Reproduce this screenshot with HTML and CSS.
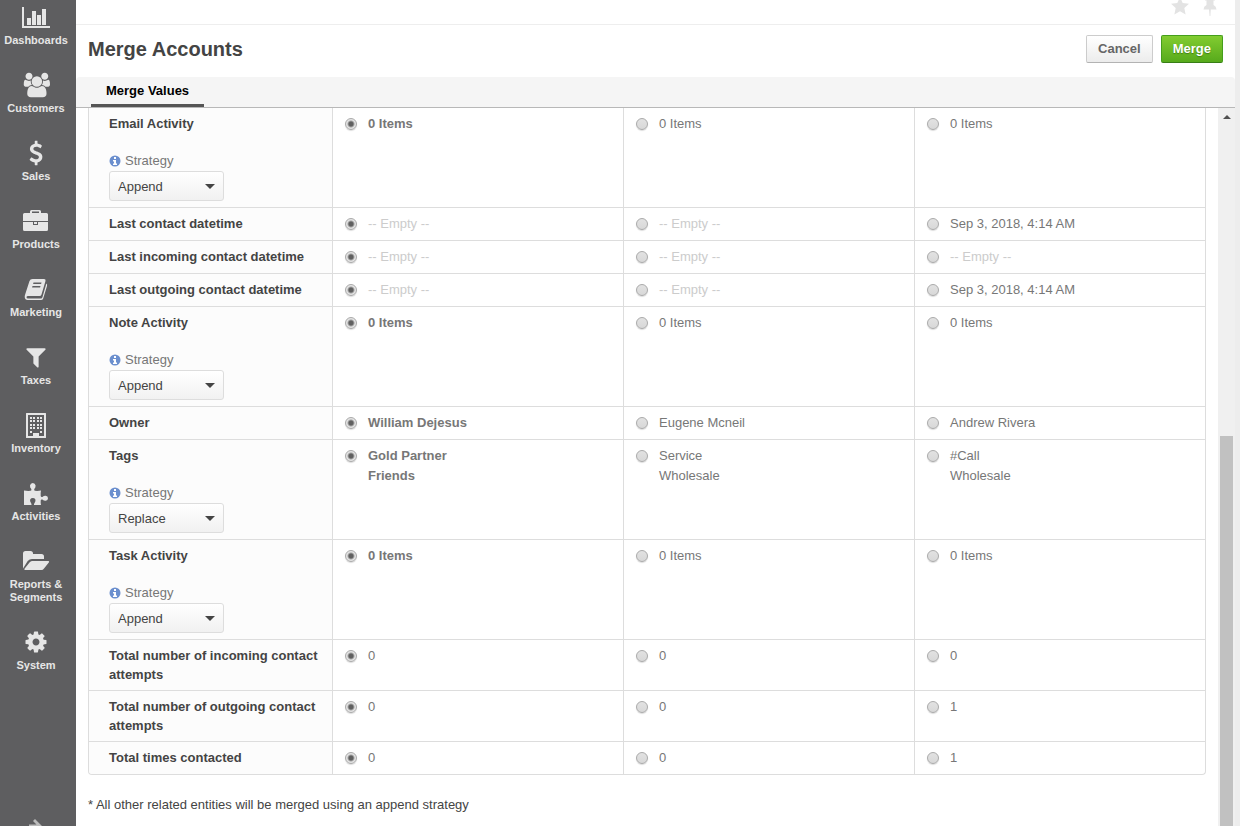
FILE: index.html
```html
<!DOCTYPE html>
<html lang="en">
<head>
<meta charset="utf-8">
<title>Merge Accounts</title>
<link rel="stylesheet" href="styles.css">
</head>
<body>
<div class="app">
  <nav class="sidebar" aria-label="Main menu">
    <a class="nav-item" href="#"><svg class="nav-icon" viewBox="0 0 28 28"><path d="M0 4h2v19h26v2H0zM5 15h4v7H5zM10 8h4v14h-4zM15 12h4v10h-4zM20 6h4v16h-4z"/></svg><span>Dashboards</span></a>
    <a class="nav-item" href="#"><svg class="nav-icon" viewBox="-64 -128 2048 2048"><path d="M657 896q-162 5-265 128h-134q-82 0-138-40.500t-56-118.500q0-353 124-353 6 0 43.500 21t97.500 42.500 119 21.500q67 0 133-23-5 37-5 66 0 139 81 256zm1071 637q0 120-73 189.500t-194 69.500h-874q-121 0-194-69.500t-73-189.500q0-53 3.500-103.500t14-109 26.500-108.500 43-97.500 62-81 85.500-53.500 111.500-20q10 0 43 21.500t73 48 107 48 135 21.500 135-21.500 107-48 73-48 43-21.500q61 0 111.500 20t85.500 53.500 62 81 43 97.500 26.500 108.500 14 109 3.500 103.500zm-1024-1277q0 106-75 181t-181 75-181-75-75-181 75-181 181-75 181 75 75 181zm704 384q0 159-112.500 271.500t-271.500 112.500-271.500-112.500-112.500-271.500 112.500-271.500 271.500-112.500 271.500 112.500 112.500 271.500zm576 225q0 78-56 118.500t-138 40.500h-134q-103-123-265-128 81-117 81-256 0-29-5-66 66 23 133 23 59 0 119-21.500t97.500-42.500 43.500-21q124 0 124 353zm-128-609q0 106-75 181t-181 75-181-75-75-181 75-181 181-75 181 75 75 181z"/></svg><span>Customers</span></a>
    <a class="nav-item" href="#"><svg class="nav-icon" viewBox="-128 -128 2048 2048"><path d="M1362 1185q0 153-99.500 263.500t-258.500 136.500v175q0 14-9 23t-23 9h-135q-13 0-22.500-9.500t-9.500-22.500v-175q-66-9-127.500-31t-101.500-44.500-74-48-46.500-37.500-17.500-18q-17-21-2-41l103-135q7-10 23-12 15-2 24 9l2 2q113 99 243 125 37 8 74 8 81 0 142.500-43t61.500-122q0-28-15-53t-33.500-42-58.500-37.500-66-32-80-32.500q-39-16-61.500-25t-61.500-26.500-62.500-31-56.500-35.500-53.500-42.500-43.500-49-35.500-58-21-66.500-8.500-78q0-138 98-242t255-134v-180q0-13 9.500-22.500t22.500-9.500h135q14 0 23 9t9 23v176q57 6 110.500 23t87 33.500 63.500 37.500 39 29 15 14q17 18 5 38l-81 146q-8 15-23 16-14 3-27-7-3-3-14.500-12t-39-26.500-58.500-32-74.500-26-85.500-11.500q-95 0-155 43t-60 111q0 26 8.500 48t29.500 41.500 39.500 33 56 31 60.500 27 70 27.500q53 20 81 31.500t76 35 75.500 42.500 62 50 53 63.500 31.500 76.500 13 94z"/></svg><span>Sales</span></a>
    <a class="nav-item" href="#"><svg class="nav-icon" viewBox="0 0 28 28"><path fill-rule="evenodd" d="M8 6V4.500Q8 3 9.500 3h8Q19 3 19 4.500V6h5.500Q26 6 26 7.500V14H1V7.500Q1 6 2.500 6zM10 6h7V4.500h-7zM1 15h10v3h5v-3h10v7.500q0 1.500-1.500 1.500h-22Q1 24 1 22.500zM12 15h3v2h-3z"/></svg><span>Products</span></a>
    <a class="nav-item" href="#"><svg class="nav-icon" viewBox="0 0 28 28"><path fill-rule="evenodd" d="M10.500 4H22q2 0 1.500 2l-4 13.500Q19 21 17.500 21H6q-1.500 0-1.500 1.200T6 23.500h13q1 0 1.500-1.500l3.900-13.500q1.100.8.600 2.500L21.200 23.500Q20.600 25 19 25H5.500Q3 25 2.700 22q0-1.500.6-3L7.500 6Q8.200 4 10.500 4zM11.500 7.500l-.4 1.500h8l.4-1.500zM10.500 11l-.4 1.500h8l.4-1.500z"/></svg><span>Marketing</span></a>
    <a class="nav-item" href="#"><svg class="nav-icon" viewBox="-128 -128 2048 2048"><path d="M1595 295q17 41-14 70l-493 493v742q0 42-39 59-13 5-25 5-27 0-45-19l-256-256q-19-19-19-45v-486l-493-493q-31-29-14-70 17-39 59-39h1280q42 0 59 39z"/></svg><span>Taxes</span></a>
    <a class="nav-item" href="#"><svg class="nav-icon" viewBox="0 0 28 28"><path fill-rule="evenodd" d="M4.500 2h19q.5 0 .5.500v24q0 .5-.5.500h-19q-.5 0-.5-.500v-24q0-.500.500-.500zM6 4v21h5v-3h6v3h5V4z"/><path d="M8 6h2v2H8zm3 0h2v2h-2zm4 0h2v2h-2zm3 0h2v2h-2zM8 9h2v2H8zm3 0h2v2h-2zm4 0h2v2h-2zm3 0h2v2h-2zM8 13h2v2H8zm3 0h2v2h-2zm4 0h2v2h-2zm3 0h2v2h-2zM8 16h2v2H8zm3 0h2v2h-2zm4 0h2v2h-2zm3 0h2v2h-2zM8 20h2v2H8zm10 0h2v2h-2z"/></svg><span>Inventory</span></a>
    <a class="nav-item" href="#"><svg class="nav-icon" viewBox="0 0 28 28"><path d="M2 11.500q3.500.7 6.500.3 1.500-.3.800-1.800-1.500-1.500-1.300-3.500Q8.500 4 10.800 4t2.800 2.500q.1 2-1.300 3.500-.7 1.500.8 1.800 3 .3 5.900-.3-.6 3-.3 5.500.3 1.500 1.700.9 1.600-1.400 3.300-1.200Q26 17 26 19.200t-2.300 2.600q-1.700.2-3.300-1.200-1.400-.6-1.700.9-.2 2 .3 4.500H12q-.3-1 .7-2.200Q14 22 13.300 20.200 12.500 19 10.800 19t-2.500 1.200Q7.500 22 8.900 23.800 9.700 25 9.500 26H2z"/></svg><span>Activities</span></a>
    <a class="nav-item" href="#"><svg class="nav-icon" viewBox="0 0 28 28"><path d="M1 21.500V6.500Q1 4 3.500 4h5Q11 4 11 6.500V7h8.500Q22 7 22 9.500V12H10q-2.500 0-4.300 2zM3 23q-1 0-.5-1.200l5-6.300Q8.500 14 10 14h16.500q1 .2.500 1.200l-5 6.300Q21 23 19.500 23z"/></svg><span>Reports &amp; Segments</span></a>
    <a class="nav-item" href="#"><svg class="nav-icon" viewBox="-128 -128 2048 2048"><path d="M1152 896q0-106-75-181t-181-75-181 75-75 181 75 181 181 75 181-75 75-181zm512-109v222q0 12-8 23t-20 13l-185 28q-19 54-39 91 35 50 107 138 10 12 10 25t-9 23q-27 37-99 108t-94 71q-12 0-26-9l-138-108q-44 23-91 38-16 136-29 186-7 28-36 28h-222q-14 0-24.500-8.500t-11.500-21.500l-28-184q-49-16-90-37l-141 107q-10 9-25 9-14 0-25-11-126-114-165-168-7-10-7-23 0-12 8-23 15-21 51-66.500t54-70.500q-27-50-41-99l-183-27q-13-2-21-12.500t-8-23.500v-222q0-12 8-23t19-13l186-28q14-46 39-92-40-57-107-138-10-12-10-24 0-10 9-23 26-36 98.500-107.500t94.500-71.500q13 0 26 10l138 107q44-23 91-38 16-136 29-186 7-28 36-28h222q14 0 24.500 8.500t11.500 21.500l28 184q49 16 90 37l142-107q9-9 24-9 13 0 25 10 129 119 165 170 7 8 7 22 0 12-8 23-15 21-51 66.500t-54 70.500q26 50 41 98l183 28q13 2 21 12.500t8 23.500z"/></svg><span>System</span></a>
    <button class="expand" type="button" aria-label="Expand menu"><svg class="expand-icon" viewBox="0 0 14 14"><path d="M6 0l7 7-7 7-2-2 3.500-3.500H0v-3h7.500L4 2z"/></svg></button>
  </nav>

  <main class="page">
    <div class="topbar">
      <button class="icon-button" type="button" aria-label="Favorite"><svg class="top-icon" viewBox="0 0 20 20"><path d="M10 1l2.700 6 6.300.7-4.700 4.300 1.300 6.500L10 15.300l-5.600 3.200L5.700 12 1 7.700 7.300 7z"/></svg></button>
      <button class="icon-button" type="button" aria-label="Pin"><svg class="top-icon" viewBox="0 0 20 20"><path d="M5 2h10v2.500h-1.500V9q2.800 1.300 3 4.500h-5.700L10.400 20h-.8l-.6-6.500H3.500q.2-3.200 3-4.500V4.500H5z"/></svg></button>
    </div>
    <header class="header">
      <h1 class="title">Merge Accounts</h1>
      <div class="actions">
        <button class="button" type="button">Cancel</button>
        <button class="button button-primary" type="submit" form="merge">Merge</button>
      </div>
    </header>
    <div class="tabs"><a class="tab" href="#merge">Merge Values</a></div>

    <div class="scroll-area">
      <form class="content" id="merge">
        <table class="merge-table">
          <colgroup><col class="name-col"><col><col><col></colgroup>
          <tbody>
            <tr>
              <th scope="row">Email Activity
                <div class="strategy"><label class="strategy-label" for="s-email"><svg class="info" viewBox="0 0 12 12"><circle cx="6" cy="6" r="5.500"/><path d="M5 2h2v2H5zM4 5h3v3.500h1V10H4V8.500h1v-2H4z"/></svg>Strategy</label><span class="select-box"><select class="select" id="s-email"><option>Append</option><option>Replace</option></select></span></div></th>
              <td><label class="choice"><input class="radio" type="radio" name="email" checked><b>0 Items</b></label></td>
              <td><label class="choice"><input class="radio" type="radio" name="email"><span>0 Items</span></label></td>
              <td><label class="choice"><input class="radio" type="radio" name="email"><span>0 Items</span></label></td>
            </tr>
            <tr>
              <th scope="row">Last contact datetime</th>
              <td><label class="choice empty"><input class="radio" type="radio" name="last" checked><span>-- Empty --</span></label></td>
              <td><label class="choice empty"><input class="radio" type="radio" name="last"><span>-- Empty --</span></label></td>
              <td><label class="choice"><input class="radio" type="radio" name="last"><span>Sep 3, 2018, 4:14 AM</span></label></td>
            </tr>
            <tr>
              <th scope="row">Last incoming contact datetime</th>
              <td><label class="choice empty"><input class="radio" type="radio" name="last-in" checked><span>-- Empty --</span></label></td>
              <td><label class="choice empty"><input class="radio" type="radio" name="last-in"><span>-- Empty --</span></label></td>
              <td><label class="choice empty"><input class="radio" type="radio" name="last-in"><span>-- Empty --</span></label></td>
            </tr>
            <tr>
              <th scope="row">Last outgoing contact datetime</th>
              <td><label class="choice empty"><input class="radio" type="radio" name="last-out" checked><span>-- Empty --</span></label></td>
              <td><label class="choice empty"><input class="radio" type="radio" name="last-out"><span>-- Empty --</span></label></td>
              <td><label class="choice"><input class="radio" type="radio" name="last-out"><span>Sep 3, 2018, 4:14 AM</span></label></td>
            </tr>
            <tr>
              <th scope="row">Note Activity
                <div class="strategy"><label class="strategy-label" for="s-note"><svg class="info" viewBox="0 0 12 12"><circle cx="6" cy="6" r="5.500"/><path d="M5 2h2v2H5zM4 5h3v3.500h1V10H4V8.500h1v-2H4z"/></svg>Strategy</label><span class="select-box"><select class="select" id="s-note"><option>Append</option><option>Replace</option></select></span></div></th>
              <td><label class="choice"><input class="radio" type="radio" name="note" checked><b>0 Items</b></label></td>
              <td><label class="choice"><input class="radio" type="radio" name="note"><span>0 Items</span></label></td>
              <td><label class="choice"><input class="radio" type="radio" name="note"><span>0 Items</span></label></td>
            </tr>
            <tr>
              <th scope="row">Owner</th>
              <td><label class="choice"><input class="radio" type="radio" name="owner" checked><b>William Dejesus</b></label></td>
              <td><label class="choice"><input class="radio" type="radio" name="owner"><span>Eugene Mcneil</span></label></td>
              <td><label class="choice"><input class="radio" type="radio" name="owner"><span>Andrew Rivera</span></label></td>
            </tr>
            <tr>
              <th scope="row">Tags
                <div class="strategy"><label class="strategy-label" for="s-tags"><svg class="info" viewBox="0 0 12 12"><circle cx="6" cy="6" r="5.500"/><path d="M5 2h2v2H5zM4 5h3v3.500h1V10H4V8.500h1v-2H4z"/></svg>Strategy</label><span class="select-box"><select class="select" id="s-tags"><option>Replace</option><option>Append</option></select></span></div></th>
              <td><label class="choice"><input class="radio" type="radio" name="tags" checked><b>Gold Partner<br>Friends</b></label></td>
              <td><label class="choice"><input class="radio" type="radio" name="tags"><span>Service<br>Wholesale</span></label></td>
              <td><label class="choice"><input class="radio" type="radio" name="tags"><span>#Call<br>Wholesale</span></label></td>
            </tr>
            <tr>
              <th scope="row">Task Activity
                <div class="strategy"><label class="strategy-label" for="s-task"><svg class="info" viewBox="0 0 12 12"><circle cx="6" cy="6" r="5.500"/><path d="M5 2h2v2H5zM4 5h3v3.500h1V10H4V8.500h1v-2H4z"/></svg>Strategy</label><span class="select-box"><select class="select" id="s-task"><option>Append</option><option>Replace</option></select></span></div></th>
              <td><label class="choice"><input class="radio" type="radio" name="task" checked><b>0 Items</b></label></td>
              <td><label class="choice"><input class="radio" type="radio" name="task"><span>0 Items</span></label></td>
              <td><label class="choice"><input class="radio" type="radio" name="task"><span>0 Items</span></label></td>
            </tr>
            <tr>
              <th scope="row">Total number of incoming contact attempts</th>
              <td><label class="choice"><input class="radio" type="radio" name="total-in" checked><span>0</span></label></td>
              <td><label class="choice"><input class="radio" type="radio" name="total-in"><span>0</span></label></td>
              <td><label class="choice"><input class="radio" type="radio" name="total-in"><span>0</span></label></td>
            </tr>
            <tr>
              <th scope="row">Total number of outgoing contact attempts</th>
              <td><label class="choice"><input class="radio" type="radio" name="total-out" checked><span>0</span></label></td>
              <td><label class="choice"><input class="radio" type="radio" name="total-out"><span>0</span></label></td>
              <td><label class="choice"><input class="radio" type="radio" name="total-out"><span>1</span></label></td>
            </tr>
            <tr>
              <th scope="row">Total times contacted</th>
              <td><label class="choice"><input class="radio" type="radio" name="total" checked><span>0</span></label></td>
              <td><label class="choice"><input class="radio" type="radio" name="total"><span>0</span></label></td>
              <td><label class="choice"><input class="radio" type="radio" name="total"><span>1</span></label></td>
            </tr>
          </tbody>
        </table>
        <p class="note">* All other related entities will be merged using an append strategy</p>
      </form>
      <div class="scrollbar" aria-hidden="true"><div class="scroll-up"></div><div class="scroll-track"></div><div class="scroll-thumb"></div></div>
    </div>
  </main>
</div>
</body>
</html>
```
FILE: styles.css
```css
* {
  box-sizing: border-box;
}

body {
  margin: 0;
  background: #ededed;
  color: #444;
  font: 13px/20px "Liberation Sans", Arial, sans-serif;
}

button,
select,
input {
  margin: 0;
  font: inherit;
}

.app {
  display: flex;
  height: 100vh;
  padding-right: 5px;
  overflow: hidden;
}

/* Sidebar */
.sidebar {
  display: flex;
  flex: none;
  flex-direction: column;
  gap: 24px;
  width: 76px;
  padding: 3px 4px 0 0;
  overflow: hidden;
  background: #5e5e60;
}

.nav-item {
  display: flex;
  flex-direction: column;
  flex: none;
  align-items: center;
  gap: 3px;
  color: #e6e6e6;
  font-size: 11px;
  font-weight: bold;
  line-height: 13px;
  text-align: center;
  text-decoration: none;
}

.nav-icon {
  width: 28px;
  height: 28px;
  fill: #e6e6e6;
}

.expand {
  height: 7px;
  margin-top: auto;
  padding: 0;
  overflow: hidden;
  border: 0;
  background: none;
}

.expand-icon {
  display: block;
  width: 14px;
  height: 14px;
  margin: 0 auto;
  fill: #bbb;
}

/* Page */
.page {
  display: flex;
  flex: 1;
  flex-direction: column;
  min-width: 0;
  background: #fff;
}

.topbar {
  display: flex;
  flex: none;
  justify-content: flex-end;
  gap: 10px;
  height: 25px;
  padding-right: 15px;
  overflow: hidden;
  border-bottom: 1px solid #eee;
}

.icon-button {
  height: 16px;
  padding: 0;
  display: flex;
  align-items: flex-end;
  border: 0;
  background: none;
}

.top-icon {
  flex: none;
  width: 20px;
  height: 20px;
  fill: #e3e3e3;
}

.header {
  display: flex;
  flex: none;
  align-items: center;
  justify-content: space-between;
  padding: 10px 12px 14px;
}

.title {
  margin: 0;
  font-size: 20px;
  line-height: 28px;
}

.actions {
  display: flex;
  gap: 8px;
}

.button {
  height: 28px;
  padding: 0 11px;
  border: 1px solid #ccc;
  border-bottom-color: #b3b3b3;
  border-radius: 2px;
  background: linear-gradient(#fff, #ececec);
  color: #666;
  font-weight: bold;
  line-height: 24px;
}

.button-primary {
  border-color: #459e1c;
  border-bottom-color: #377e16;
  background: linear-gradient(#82cc30, #57aa1c);
  color: #fff;
  text-shadow: 0 1px 1px #3f7f14;
}

.tabs {
  display: flex;
  flex: none;
  height: 31px;
  padding-left: 15px;
  border-bottom: 1px solid #b8b8b8;
  border-radius: 4px 4px 0 0;
  background: #f5f5f5;
}

.tab {
  padding: 4px 15px 0;
  border-bottom: 3px solid #555;
  color: #000;
  font-weight: bold;
  text-decoration: none;
}

.scroll-area {
  display: flex;
  flex: 1;
  min-height: 0;
}

.content {
  flex: 1;
  padding: 0 12px;
  overflow: hidden;
}

/* Merge table */
.merge-table {
  width: 100%;
  border: 1px solid #ddd;
  border-top: 0;
  border-radius: 0 0 4px 4px;
  border-spacing: 0;
  table-layout: fixed;
}

.name-col {
  width: 243px;
}

th,
td {
  padding: 6px 12px;
  border-bottom: 1px solid #ddd;
  vertical-align: top;
}

td {
  border-left: 1px solid #ddd;
  color: #777;
}

th {
  padding-right: 12px;
  padding-left: 20px;
  background: #fcfcfc;
  line-height: 19px;
  text-align: left;
}

tr:last-child th,
tr:last-child td {
  border-bottom: 0;
}

tr:last-child th {
  border-bottom-left-radius: 4px;
}

.choice {
  display: flex;
  gap: 11px;
}

.empty {
  color: #ccc;
}

.radio {
  flex: none;
  width: 12px;
  height: 12px;
  margin-top: 4px;
  border: 1px solid #aaa;
  border-radius: 50%;
  appearance: none;
  background: linear-gradient(#e2e2e2, #d8d8d8);
  box-shadow: 0 1px 1px #ddd;
}

.radio:checked {
  background: radial-gradient(circle, #606060 2px, #e4e4e4 4px);
}

.strategy {
  margin-top: 18px;
  font-weight: normal;
}

.strategy-label {
  display: flex;
  align-items: center;
  gap: 4px;
  color: #777;
  line-height: 20px;
}

.info {
  width: 12px;
  height: 12px;
  fill: #6b8fce;
}

.info path {
  fill: #fff;
}

.select-box {
  display: block;
  position: relative;
  width: 115px;
}

.select-box::after {
  content: "";
  position: absolute;
  top: 13px;
  right: 9px;
  border: 5px solid transparent;
  border-top-color: #444;
  border-bottom-width: 0;
  pointer-events: none;
}

.select {
  display: block;
  width: 100%;
  height: 30px;
  padding: 0 8px;
  border: 1px solid #ddd;
  border-radius: 3px;
  appearance: none;
  background: linear-gradient(#fff, #f1f1f1);
  color: #444;
}

.note {
  margin: 20px 0 0;
}

/* Scrollbar */
.scrollbar {
  display: flex;
  flex: none;
  flex-direction: column;
  width: 17px;
  padding: 0 2px;
  background: #f0f0f0;
}

.scroll-up {
  width: 0;
  margin: 7px auto 0;
  border: 4px solid transparent;
  border-top: 0;
  border-bottom-color: #505050;
}

.scroll-track {
  flex: 317;
}

.scroll-thumb {
  flex: 390;
  background: #c1c1c1;
}
```
